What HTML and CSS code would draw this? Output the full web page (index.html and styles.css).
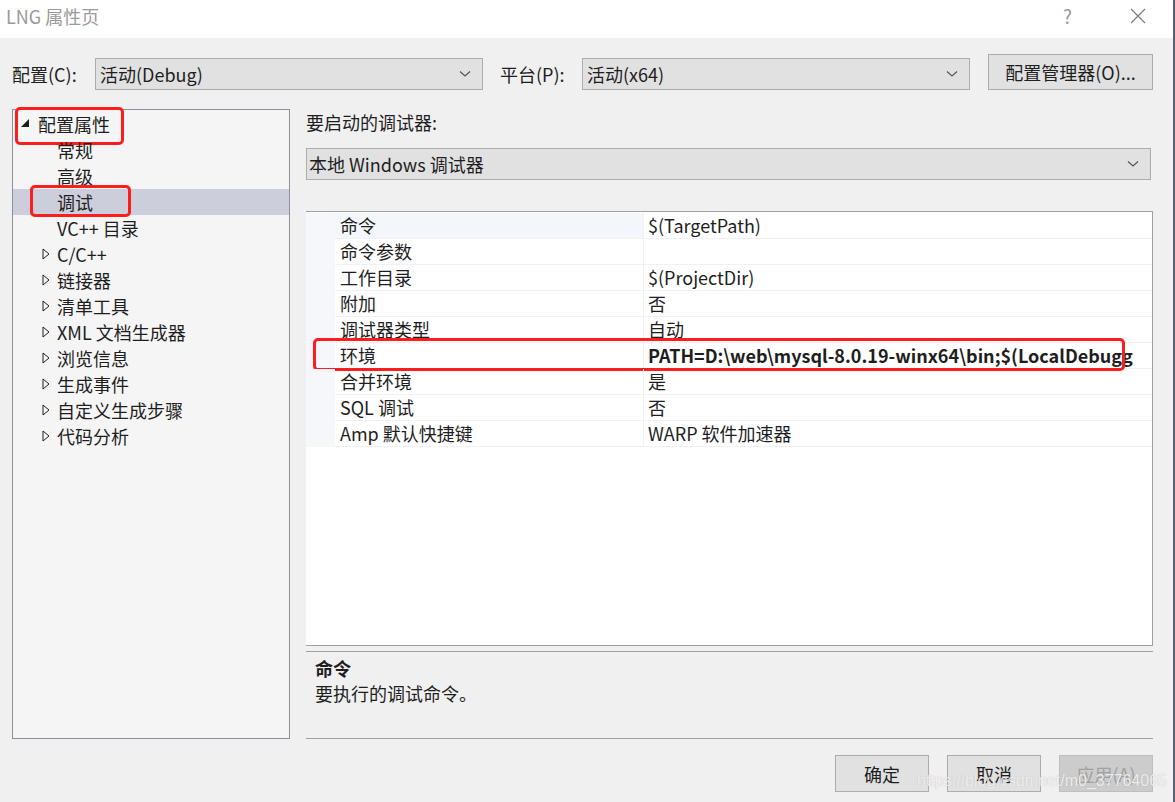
FILE: index.html
```html
<!DOCTYPE html>
<html lang="zh-CN">
<head>
    <meta charset="UTF-8">
    <title>LNG 属性页</title>
    <link rel="stylesheet" href="styles.css">
</head>
<body>
<div class="screen">
    <div class="dialog">
        <!-- barra de título -->
        <div class="titlebar">
            <span class="title">LNG 属性页</span>
            <span class="help">?</span>
            <svg class="close" width="16" height="16" viewBox="0 0 16 16">
                <path d="M1 1 L15 15 M15 1 L1 15" stroke="#7a7a7a" stroke-width="1.2" fill="none"/>
            </svg>
        </div>

        <div class="content">
            <!-- configuração / plataforma -->
            <div class="toprow">
                <label class="toplabel">配置(C):</label>
                <div class="combo combo-config">
                    <span>活动(Debug)</span>
                    <svg class="chev" width="12" height="8" viewBox="0 0 12 8"><path d="M1 1.5 L6 6 L11 1.5" stroke="#555" stroke-width="1.2" fill="none"/></svg>
                </div>
                <label class="toplabel toplabel-plat">平台(P):</label>
                <div class="combo combo-plat">
                    <span>活动(x64)</span>
                    <svg class="chev" width="12" height="8" viewBox="0 0 12 8"><path d="M1 1.5 L6 6 L11 1.5" stroke="#555" stroke-width="1.2" fill="none"/></svg>
                </div>
                <button class="btn btn-manager">配置管理器(O)...</button>
            </div>

            <div class="main">
                <!-- árvore -->
                <div class="tree">
                    <div class="node root">
                        <svg class="tri-open" width="9" height="9" viewBox="0 0 9 9"><polygon points="8,0 8,8 0,8" fill="#1e1e1e"/></svg>
                        <span>配置属性</span>
                        <div class="mark mark-root"></div>
                    </div>
                    <div class="node child">常规</div>
                    <div class="node child">高级</div>
                    <div class="node child selected">调试<div class="mark mark-debug"></div></div>
                    <div class="node child">VC++ 目录</div>
                    <div class="node closed"><svg class="tri" width="8" height="12" viewBox="0 0 8 12"><polygon points="1,1 7,6 1,11" fill="none" stroke="#1e1e1e" stroke-width="1"/></svg><span>C/C++</span></div>
                    <div class="node closed"><svg class="tri" width="8" height="12" viewBox="0 0 8 12"><polygon points="1,1 7,6 1,11" fill="none" stroke="#1e1e1e" stroke-width="1"/></svg><span>链接器</span></div>
                    <div class="node closed"><svg class="tri" width="8" height="12" viewBox="0 0 8 12"><polygon points="1,1 7,6 1,11" fill="none" stroke="#1e1e1e" stroke-width="1"/></svg><span>清单工具</span></div>
                    <div class="node closed"><svg class="tri" width="8" height="12" viewBox="0 0 8 12"><polygon points="1,1 7,6 1,11" fill="none" stroke="#1e1e1e" stroke-width="1"/></svg><span>XML 文档生成器</span></div>
                    <div class="node closed"><svg class="tri" width="8" height="12" viewBox="0 0 8 12"><polygon points="1,1 7,6 1,11" fill="none" stroke="#1e1e1e" stroke-width="1"/></svg><span>浏览信息</span></div>
                    <div class="node closed"><svg class="tri" width="8" height="12" viewBox="0 0 8 12"><polygon points="1,1 7,6 1,11" fill="none" stroke="#1e1e1e" stroke-width="1"/></svg><span>生成事件</span></div>
                    <div class="node closed"><svg class="tri" width="8" height="12" viewBox="0 0 8 12"><polygon points="1,1 7,6 1,11" fill="none" stroke="#1e1e1e" stroke-width="1"/></svg><span>自定义生成步骤</span></div>
                    <div class="node closed"><svg class="tri" width="8" height="12" viewBox="0 0 8 12"><polygon points="1,1 7,6 1,11" fill="none" stroke="#1e1e1e" stroke-width="1"/></svg><span>代码分析</span></div>
                </div>

                <!-- painel direito -->
                <div class="panel">
                    <div class="debugger-label">要启动的调试器:</div>
                    <div class="combo combo-debugger">
                        <span>本地 Windows 调试器</span>
                        <svg class="chev" width="12" height="8" viewBox="0 0 12 8"><path d="M1 1.5 L6 6 L11 1.5" stroke="#555" stroke-width="1.2" fill="none"/></svg>
                    </div>

                    <div class="grid">
                        <div class="row first"><div class="gutter"></div><div class="name">命令</div><div class="value">$(TargetPath)</div></div>
                        <div class="row"><div class="gutter"></div><div class="name">命令参数</div><div class="value"></div></div>
                        <div class="row"><div class="gutter"></div><div class="name">工作目录</div><div class="value">$(ProjectDir)</div></div>
                        <div class="row"><div class="gutter"></div><div class="name">附加</div><div class="value">否</div></div>
                        <div class="row"><div class="gutter"></div><div class="name">调试器类型</div><div class="value">自动</div></div>
                        <div class="row env"><div class="gutter"></div><div class="name">环境</div><div class="value bold">PATH=D:\web\mysql-8.0.19-winx64\bin;$(LocalDebugg</div><div class="mark mark-env"></div></div>
                        <div class="row"><div class="gutter"></div><div class="name">合并环境</div><div class="value">是</div></div>
                        <div class="row"><div class="gutter"></div><div class="name">SQL 调试</div><div class="value">否</div></div>
                        <div class="row"><div class="gutter"></div><div class="name">Amp 默认快捷键</div><div class="value">WARP 软件加速器</div></div>
                        <div class="grid-fill"><div class="gutter"></div></div>
                    </div>

                    <div class="desc">
                        <div class="desc-title">命令</div>
                        <div class="desc-text">要执行的调试命令。</div>
                    </div>
                </div>
            </div>

            <!-- botões -->
            <div class="buttons">
                <button class="btn">确定</button>
                <button class="btn">取消</button>
                <button class="btn disabled">应用(A)</button>
            </div>
        </div>
        <div class="watermark">https://blog.csdn.net/m0_37764065</div>
    </div>
    <div class="edge"></div>
</div>
</body>
</html>
```

FILE: styles.css
```css
/* Estilos gerais */
html, body {
    margin: 0;
    padding: 0;
}

body {
    font-family: 'Noto Sans CJK SC', 'Noto Sans', sans-serif;
    font-size: 18px;
    color: #1e1e1e;
    background-color: #f0f0f0;
}

.screen {
    display: flex;
    width: 1175px;
    height: 802px;
    overflow: hidden;
}

.dialog {
    position: relative;
    width: 1173px;
    height: 802px;
    background-color: #f0f0f0;
}

.edge {
    width: 2px;
    background-color: #56607a;
}

/* Barra de título */
.titlebar {
    display: flex;
    align-items: center;
    height: 38px;
    background-color: #fff;
    padding: 0 0 0 6px;
}

.title {
    color: #9a9a9a;
    font-size: 18px;
    flex: 1;
    line-height: 1;
    margin-top: -7px;
}

.help {
    color: #9a9a9a;
    font-size: 19px;
    margin-right: 58px;
    margin-top: -8px;
}

.close {
    margin-right: 27px;
    margin-top: -6px;
}

.content {
    padding: 16px 20px 0 12px;
}

/* Linha superior */
.toprow {
    display: flex;
    align-items: flex-end;
    height: 36px;
}

.toplabel {
    width: 83px;
    height: 32px;
    line-height: 32px;
}

.toplabel-plat {
    margin-left: 17px;
    width: 82px;
}

.combo {
    display: flex;
    align-items: center;
    box-sizing: border-box;
    height: 32px;
    background-color: #e1e1e1;
    border: 1px solid #adadad;
    padding: 0 11px 0 4px;
}

.combo span {
    flex: 1;
    white-space: nowrap;
}

.combo-config, .combo-plat {
    width: 388px;
}

.btn {
    box-sizing: border-box;
    font-family: inherit;
    font-size: 18px;
    color: #1e1e1e;
    background-color: #e1e1e1;
    border: 1px solid #adadad;
    padding: 0;
    height: 37px;
    width: 94px;
}

.btn-manager {
    margin-left: 18px;
    width: 165px;
    height: 36px;
}

.btn.disabled {
    background-color: #cccccc;
    border-color: #bfbfbf;
    color: #a0a0a0;
}

/* Área principal */
.main {
    display: flex;
    gap: 16px;
    margin-top: 19px;
}

.tree {
    box-sizing: border-box;
    width: 278px;
    height: 630px;
    background-color: #f5f5f5;
    border: 1px solid #8c9099;
    padding-top: 1px;
}

.node {
    position: relative;
    height: 26px;
    line-height: 26px;
    white-space: nowrap;
}

.root {
    padding-left: 25px;
}

.tri-open {
    position: absolute;
    left: 8px;
    top: 8px;
}

.child {
    padding-left: 44px;
}

.selected {
    background-color: #cccedb;
}

.closed {
    padding-left: 44px;
}

.closed .tri {
    position: absolute;
    left: 29px;
    top: 7px;
}

/* Marcações vermelhas */
.mark {
    position: absolute;
    border: 3px solid #fa1e1e;
    border-radius: 5px;
    pointer-events: none;
}

.mark-root {
    left: 2px;
    top: -4px;
    width: 103px;
    height: 32px;
}

.mark-debug {
    left: 17px;
    top: -4px;
    width: 95px;
    height: 26px;
}

/* Painel direito */
.panel {
    display: flex;
    flex-direction: column;
    width: 847px;
}

.debugger-label {
    height: 26px;
    line-height: 26px;
}

.combo-debugger {
    margin-top: 13px;
    width: 845px;
    height: 32px;
    padding-left: 2px;
}

.grid {
    box-sizing: border-box;
    margin-top: 31px;
    height: 435px;
    background-color: #fff;
    border: 1px solid #a0a0a0;
    border-left: 0;
    padding-top: 1px;
    display: flex;
    flex-direction: column;
    overflow: hidden;
}

.row {
    position: relative;
    display: flex;
    height: 26px;
    line-height: 25px;
    white-space: nowrap;
}

.gutter {
    width: 29px;
    flex: none;
    background-color: #f5f7fb;
}

.name {
    width: 303px;
    flex: none;
    padding-left: 5px;
    border-bottom: 1px solid #f0f0f5;
    border-right: 1px solid #f0f0f5;
}

.row.first .name {
    background-color: #f3f6fb;
}

.value {
    flex: 1;
    padding-left: 4px;
    border-bottom: 1px solid #f0f0f5;
    overflow: hidden;
}

.value.bold {
    font-weight: bold;
}

.mark-env {
    left: 7px;
    top: -5px;
    width: 806px;
    height: 27px;
}

.grid-fill {
    flex: 1;
    display: flex;
}

.grid-fill .gutter {
    background-color: #fff;
}

.desc {
    box-sizing: border-box;
    margin-top: 5px;
    height: 88px;
    border-top: 1px solid #a0a0a0;
    border-bottom: 1px solid #a0a0a0;
    padding: 4px 9px;
}

.desc-title {
    font-weight: bold;
    line-height: 24px;
}

.desc-text {
    line-height: 26px;
}

/* Botões inferiores */
.buttons {
    display: flex;
    justify-content: flex-end;
    gap: 18px;
    margin-top: 16px;
}

.watermark {
    position: absolute;
    left: 917px;
    top: 772px;
    font-family: 'Liberation Sans', Arial, sans-serif;
    font-size: 16px;
    color: rgba(255, 255, 255, 0.8);
    text-shadow: 0 0 1px rgba(140, 140, 140, 0.6);
    white-space: nowrap;
}
```
